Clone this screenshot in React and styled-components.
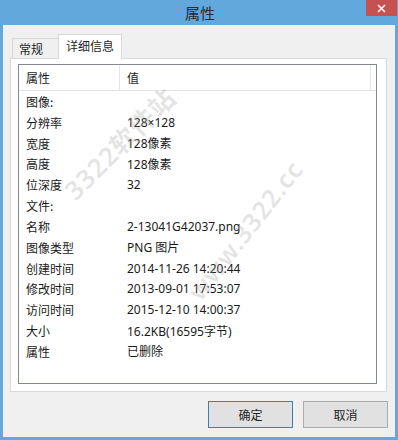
import React from "react";
import styled, { createGlobalStyle } from "styled-components";

const GlobalStyle = createGlobalStyle`
  html, body {
    margin: 0;
    padding: 0;
    background: #62a8dc;
  }
  body {
    font-family: "Noto Sans", "Noto Sans CJK SC", sans-serif;
  }
`;

const rows = [
  ["图像:", ""],
  ["分辨率", "128×128"],
  ["宽度", "128像素"],
  ["高度", "128像素"],
  ["位深度", "32"],
  ["文件:", ""],
  ["名称", "2-13041G42037.png"],
  ["图像类型", "PNG 图片"],
  ["创建时间", "2014-11-26 14:20:44"],
  ["修改时间", "2013-09-01 17:53:07"],
  ["访问时间", "2015-12-10 14:00:37"],
  ["大小", "16.2KB(16595字节)"],
  ["属性", "已删除"],
];

const App = () => {
  return (
    <Window>
      <GlobalStyle />
      <TitleBar>
        <span />
        <Title>属性</Title>
        <CloseArea>
          <CloseButton>
            <svg width="9" height="9" viewBox="0 0 9 9">
              <path d="M1 1 L8 8 M8 1 L1 8" stroke="#fff" strokeWidth="1.6" />
            </svg>
          </CloseButton>
        </CloseArea>
      </TitleBar>
      <Client>
        <TabStrip>
          <Tab>常规</Tab>
          <Tab active>详细信息</Tab>
        </TabStrip>
        <Panel>
          <ListBox>
            <Header>
              <HeadCell width="101px">属性</HeadCell>
              <HeadCell width="251px">值</HeadCell>
            </Header>
            <Rows>
              {rows.map(([name, value]) => (
                <Row key={name + value}>
                  <NameCell>{name}</NameCell>
                  <ValueCell>{value}</ValueCell>
                </Row>
              ))}
            </Rows>
            <Watermark top="110px" left="49px" angle="-45deg" size="26px">
              3322软件站
            </Watermark>
            <Watermark top="214px" left="174px" angle="-52deg" size="25px">
              www.3322.cc
            </Watermark>
          </ListBox>
        </Panel>
        <ButtonRow>
          <Button primary>确定</Button>
          <Button>取消</Button>
        </ButtonRow>
      </Client>
    </Window>
  );
};

export default App;

const Window = styled.div`
  width: 398px;
  height: 440px;
  background: #62a8dc;
  display: flex;
  flex-direction: column;
  overflow: hidden;
`;

const TitleBar = styled.div`
  height: 25px;
  display: grid;
  grid-template-columns: 1fr auto 1fr;
  align-items: start;
`;

const Title = styled.div`
  font-family: "Noto Sans CJK SC", sans-serif;
  font-size: 15px;
  line-height: 25px;
  color: #2b2b2b;
  padding-left: 2px;
`;

const CloseArea = styled.div`
  display: flex;
  justify-content: flex-end;
  padding-right: 1px;
`;

const CloseButton = styled.div`
  width: 31px;
  height: 16px;
  background: #c75050;
  display: flex;
  align-items: center;
  justify-content: center;
`;

const Client = styled.div`
  flex: 1;
  margin: 0 3px 3px 3px;
  background: #f0f0f0;
  display: flex;
  flex-direction: column;
  padding: 10px 7px 9px 7px;
`;

const TabStrip = styled.div`
  display: flex;
  align-items: flex-end;
  padding-left: 2px;
  height: 24px;
  position: relative;
  z-index: 1;
  margin-bottom: -1px;
`;

const Tab = styled.div`
  font-family: "Noto Sans CJK SC", sans-serif;
  font-size: 12px;
  color: #1e1e1e;
  box-sizing: border-box;
  border: 1px solid #d9d9d9;
  border-bottom: ${(p) => (p.active ? "none" : "1px solid #d9d9d9")};
  background: ${(p) => (p.active ? "#ffffff" : "#f0f0f0")};
  height: ${(p) => (p.active ? "25px" : "21px")};
  line-height: ${(p) => (p.active ? "22px" : "19px")};
  padding: ${(p) => (p.active ? "0 7px" : "0 6px")};
  margin-left: ${(p) => (p.active ? "-1px" : "0")};
  width: ${(p) => (p.active ? "64px" : "47px")};
  position: relative;
  z-index: ${(p) => (p.active ? 2 : 1)};
`;

const Panel = styled.div`
  flex: 1;
  background: #ffffff;
  border: 1px solid #d9d9d9;
  margin-right: 1px;
  padding: 5px 9px 7px 7px;
  display: flex;
  flex-direction: column;
`;

const ListBox = styled.div`
  flex: 1;
  border: 1px solid #828790;
  background: #ffffff;
  position: relative;
  overflow: hidden;
`;

const Header = styled.div`
  display: flex;
  height: 25px;
  border-bottom: 1px solid #e5e5e5;
`;

const HeadCell = styled.div`
  width: ${(p) => p.width};
  box-sizing: border-box;
  border-right: 1px solid #e5e5e5;
  padding-left: 7px;
  font-family: "Noto Sans CJK SC", sans-serif;
  font-size: 12px;
  line-height: 25px;
  color: #1e1e1e;
`;

const Rows = styled.div`
  display: flex;
  flex-direction: column;
`;

const Row = styled.div`
  display: flex;
  height: 20.83px;
  align-items: center;
  font-size: 12px;
  color: #1a1a1a;
`;

const NameCell = styled.div`
  width: 101px;
  padding-left: 7px;
  box-sizing: border-box;
  font-family: "Noto Sans CJK SC", sans-serif;
`;

const ValueCell = styled.div`
  padding-left: 7px;
  white-space: nowrap;
`;

const Watermark = styled.div`
  position: absolute;
  top: ${(p) => p.top};
  left: ${(p) => p.left};
  transform: rotate(${(p) => p.angle});
  transform-origin: left center;
  font-family: "Noto Sans", "Noto Sans CJK SC", sans-serif;
  font-size: ${(p) => p.size};
  font-weight: 600;
  color: rgba(160, 160, 160, 0.28);
  white-space: nowrap;
  pointer-events: none;
  letter-spacing: 1px;
`;

const ButtonRow = styled.div`
  display: flex;
  justify-content: flex-end;
  gap: 10px;
  padding-top: 9px;
`;

const Button = styled.div`
  width: 85px;
  height: 27px;
  box-sizing: border-box;
  border: 1px solid ${(p) => (p.primary ? "#3c7fb1" : "#acacac")};
  background: #e1e1e1;
  display: flex;
  align-items: center;
  justify-content: center;
  font-family: "Noto Sans CJK SC", sans-serif;
  font-size: 12px;
  color: #1e1e1e;
`;
